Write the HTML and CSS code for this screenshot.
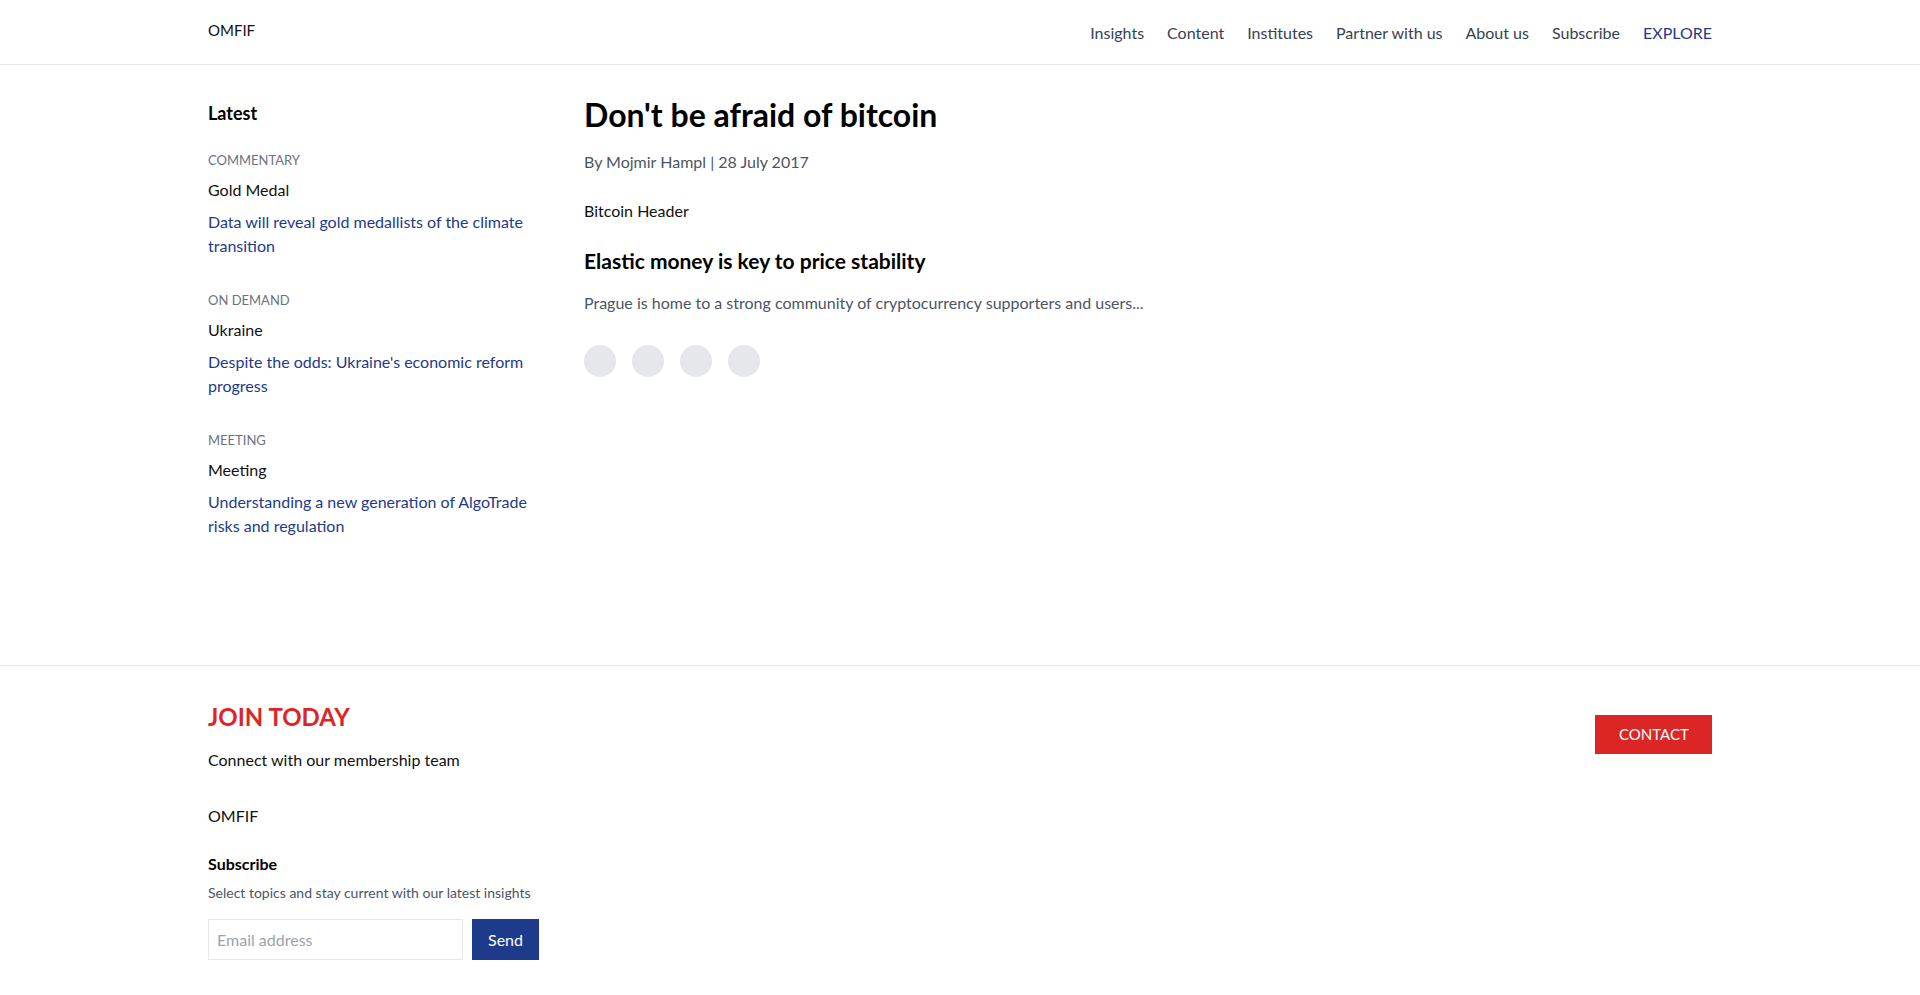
FILE: index.html
```html
<!DOCTYPE html>
<html lang="en">
<head>
<meta charset="utf-8">
<title>Don't be afraid of bitcoin | OMFIF</title>
<link rel="stylesheet" href="styles.css">
</head>
<body>
<header class="site-header">
  <div class="container header-inner">
    <a class="logo" href="#">OMFIF</a>
    <nav class="main-nav">
      <a href="#">Insights</a>
      <a href="#">Content</a>
      <a href="#">Institutes</a>
      <a href="#">Partner with us</a>
      <a href="#">About us</a>
      <a href="#">Subscribe</a>
      <a href="#" class="explore">EXPLORE</a>
    </nav>
  </div>
</header>

<main class="container page">
  <aside class="sidebar">
    <h3 class="sidebar-title">Latest</h3>
    <div class="latest-item">
      <div class="category">COMMENTARY</div>
      <div class="item-title">Gold Medal</div>
      <a class="item-link" href="#">Data will reveal gold medallists of the climate transition</a>
    </div>
    <div class="latest-item">
      <div class="category">ON DEMAND</div>
      <div class="item-title">Ukraine</div>
      <a class="item-link" href="#">Despite the odds: Ukraine's economic reform progress</a>
    </div>
    <div class="latest-item">
      <div class="category">MEETING</div>
      <div class="item-title">Meeting</div>
      <a class="item-link" href="#">Understanding a new generation of AlgoTrade risks and regulation</a>
    </div>
  </aside>

  <article class="article">
    <h1 class="article-title">Don't be afraid of bitcoin</h1>
    <p class="byline">By Mojmir Hampl | 28 July 2017</p>
    <p class="header-alt">Bitcoin Header</p>
    <h2 class="article-subtitle">Elastic money is key to price stability</h2>
    <p class="excerpt">Prague is home to a strong community of cryptocurrency supporters and users...</p>
    <div class="share">
      <span class="share-dot"></span>
      <span class="share-dot"></span>
      <span class="share-dot"></span>
      <span class="share-dot"></span>
    </div>
  </article>
</main>

<footer class="site-footer">
  <div class="container footer-inner">
    <div class="footer-left">
      <h2 class="join">JOIN TODAY</h2>
      <p class="connect">Connect with our membership team</p>
      <p class="footer-logo">OMFIF</p>
      <h4 class="sub-title">Subscribe</h4>
      <p class="sub-text">Select topics and stay current with our latest insights</p>
      <form class="sub-form">
        <input class="email" type="email" placeholder="Email address">
        <button class="send" type="button">Send</button>
      </form>
    </div>
    <a class="contact" href="#">CONTACT</a>
  </div>
</footer>
</body>
</html>
```
FILE: styles.css
```css
* { box-sizing: border-box; }
html, body { margin: 0; padding: 0; }
body {
  font-family: Lato, "Liberation Sans", sans-serif;
  font-size: 16px;
  line-height: 24px;
  color: #000;
  background: #fff;
}
a { text-decoration: none; color: inherit; }
h1, h2, h3, h4, p { margin: 0; }

.container {
  max-width: 1536px;
  margin: 0 auto;
  padding: 0 16px;
}

/* Header */
.site-header {
  border-bottom: 1px solid #e5e7eb;
}
.header-inner {
  height: 64px;
  display: flex;
  align-items: center;
  justify-content: space-between;
}
.logo {
  font-size: 15px;
  color: #111;
  margin-bottom: 4px;
}
.main-nav {
  display: flex;
  gap: 23px;
  margin-top: 2px;
}
.main-nav a {
  color: #374151;
  font-size: 16px;
}
.main-nav a.explore { color: #1e3a8a; }

/* Page */
.page {
  display: flex;
  min-height: 600px;
  padding-top: 34px;
  padding-bottom: 32px;
}
.sidebar {
  width: 376px;
  flex-shrink: 0;
  padding-right: 32px;
}
.sidebar-title {
  font-size: 18px;
  line-height: 28px;
  font-weight: 700;
  margin-bottom: 23px;
}
.latest-item { margin-bottom: 32px; }
.category {
  font-size: 13px;
  line-height: 20px;
  color: #6b7280;
  margin-bottom: 8px;
}
.item-title {
  color: #111;
  margin-bottom: 8px;
}
.item-link {
  display: block;
  color: #1e3a8a;
}

.article { flex: 1; }
.article-title {
  font-size: 32px;
  line-height: 32px;
  font-weight: 700;
  margin-bottom: 19px;
}
.byline {
  color: #4b5563;
  margin-bottom: 25px;
}
.header-alt {
  color: #111;
  margin-bottom: 24px;
}
.article-subtitle {
  font-size: 21px;
  line-height: 28px;
  font-weight: 700;
  margin-bottom: 16px;
}
.excerpt {
  color: #4b5563;
}
.share {
  display: flex;
  gap: 16px;
  margin-top: 30px;
}
.share-dot {
  width: 32px;
  height: 32px;
  border-radius: 50%;
  background: #e5e7eb;
}

/* Footer */
.site-footer {
  border-top: 1px solid #e5e7eb;
}
.footer-inner {
  display: flex;
  justify-content: space-between;
  align-items: flex-start;
  padding-top: 35px;
  padding-bottom: 32px;
}
.join {
  font-size: 24px;
  line-height: 32px;
  font-weight: 700;
  color: #dc2626;
  margin-bottom: 15px;
}
.connect {
  color: #111;
  margin-bottom: 32px;
}
.footer-logo {
  color: #111;
  margin-bottom: 24px;
}
.sub-title {
  font-size: 16px;
  font-weight: 700;
  margin-bottom: 7px;
}
.sub-text {
  font-size: 14px;
  line-height: 20px;
  color: #4b5563;
  margin-bottom: 16px;
}
.sub-form {
  display: flex;
  gap: 9px;
}
.email {
  width: 255px;
  height: 41px;
  border: 1px solid #e5e7eb;
  padding: 0 8px;
  font-family: inherit;
  font-size: 16px;
  color: #111;
  outline: none;
}
.email::placeholder { color: #9ca3af; }
.send {
  width: 67px;
  height: 41px;
  border: 0;
  background: #1e3a8a;
  color: #fff;
  font-family: inherit;
  font-size: 16px;
  cursor: pointer;
}
.contact {
  display: block;
  margin-top: 14px;
  background: #dc2626;
  color: #fff;
  font-size: 15px;
  line-height: 23px;
  padding: 8px 24px;
  width: 117px;
  text-align: center;
}
```
